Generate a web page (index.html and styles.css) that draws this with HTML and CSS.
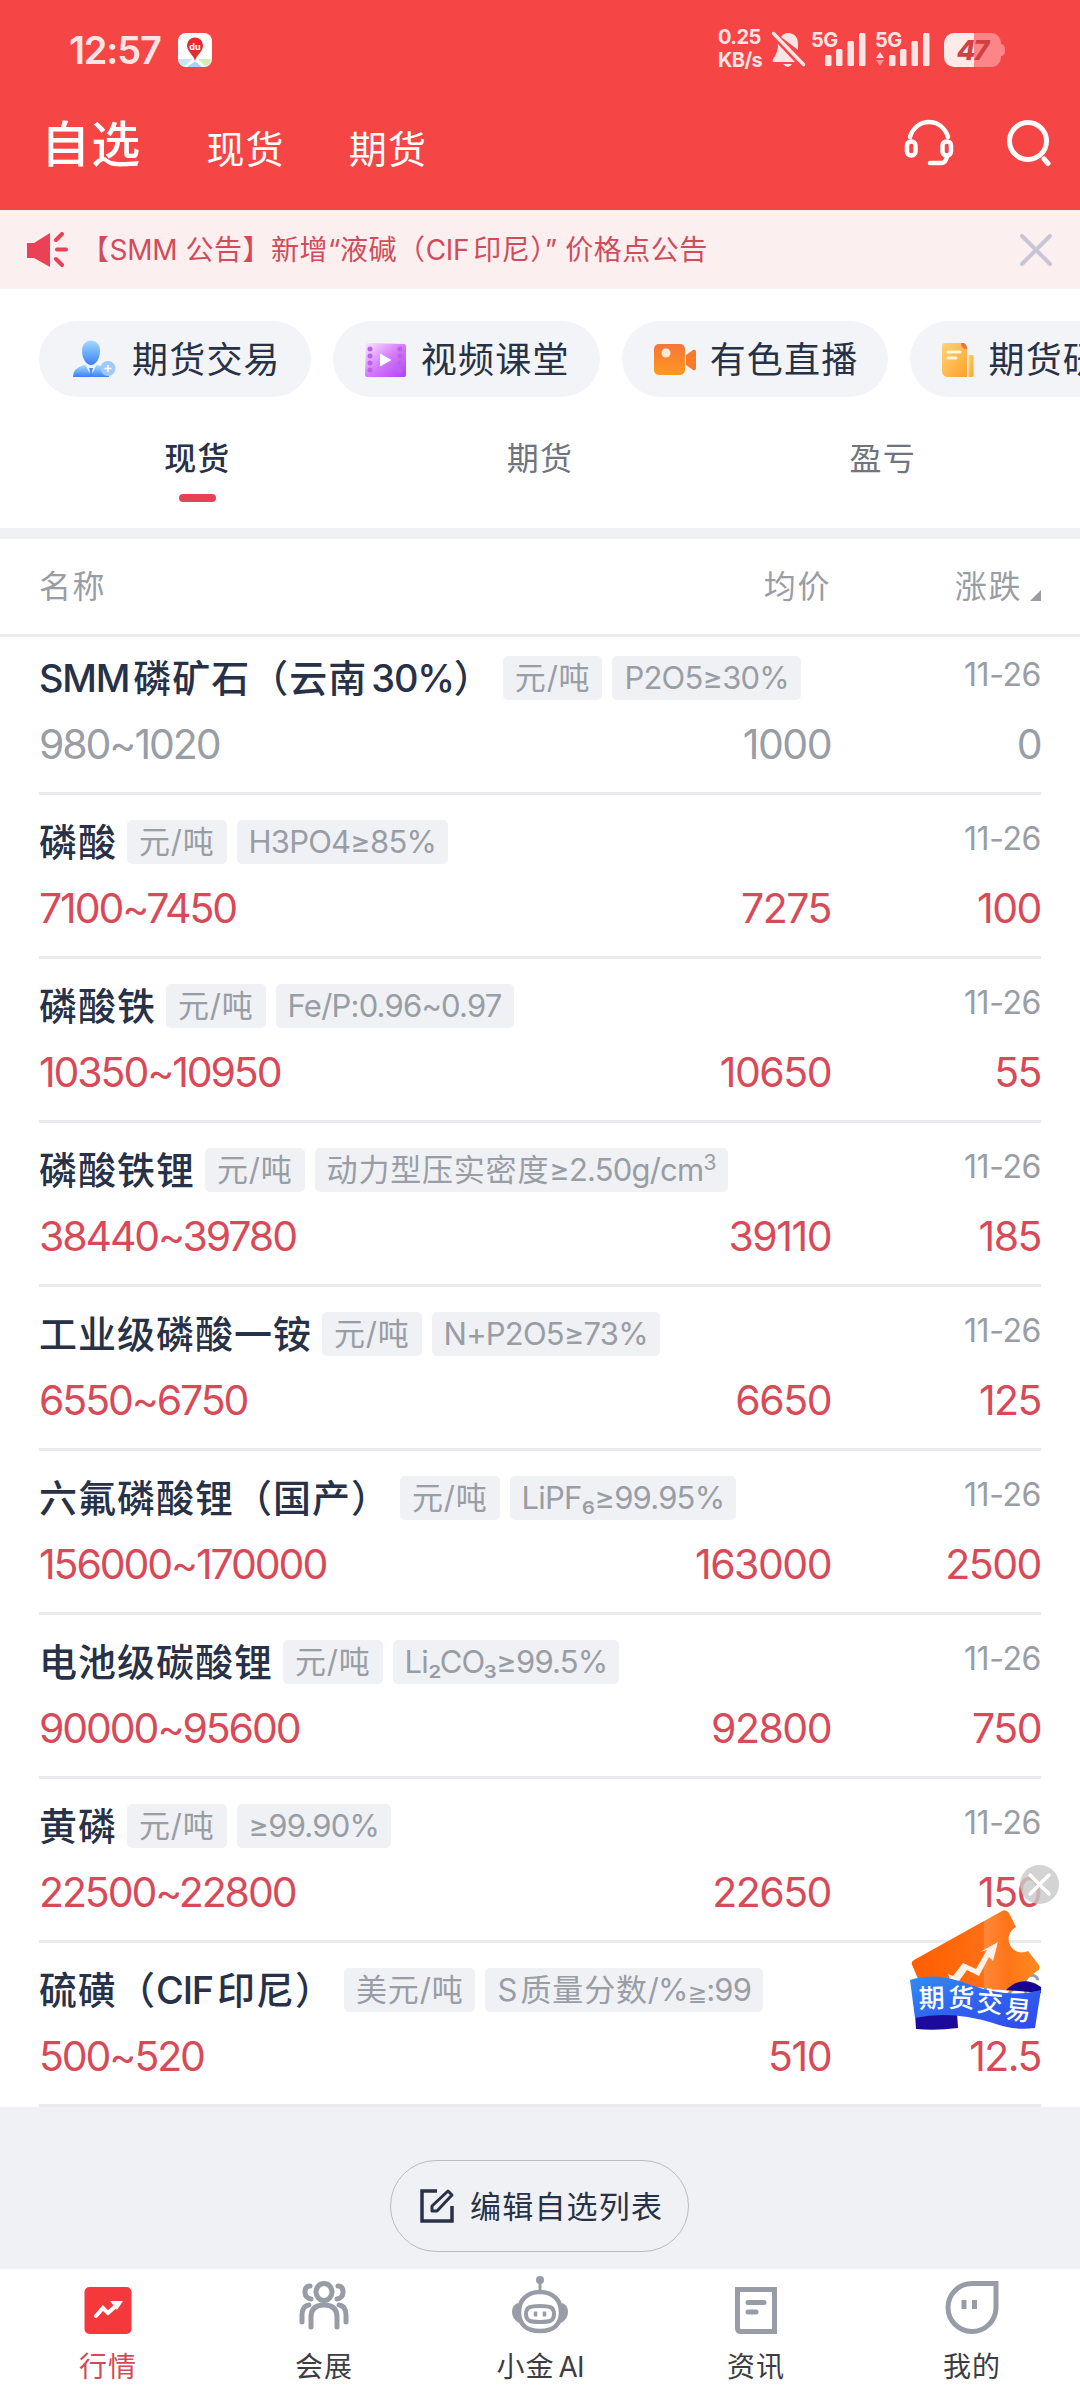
FILE: index.html
```html
<!DOCTYPE html>
<html lang="zh-CN">
<head>
    <meta charset="UTF-8">
    <meta name="viewport" content="width=device-width, initial-scale=1.0">
    <title>自选</title>
    <link rel="stylesheet" href="styles.css">
</head>
<body>

<header class="header">
    <div class="status-bar">
        <span class="time">12:57</span>
        <svg class="map-icon" width="34" height="34" viewBox="0 0 34 34">
            <rect width="34" height="34" rx="8" fill="#fff"/>
            <path d="M1 26h13L7 33Q1 32 1 26z" fill="#c5e6fa"/>
            <path d="M20 26h13q0 6-6 7z" fill="#d3ecb5"/>
            <path d="M16 29h2l6 5H9z" fill="#a8d4f5"/>
            <path d="M17 28C16 22 9 19 9 12.500a8 8 0 0 1 16 0C25 19 18 22 17 28z" fill="#e32c30"/>
            <text x="17" y="16.500" text-anchor="middle" class="map-text">du</text>
        </svg>
        <span class="speed">0.25<br>KB/s</span>
        <svg class="bell" width="36" height="38" viewBox="0 0 36 38" fill="#ffe4e4">
            <path d="M10 6Q13 2 17 2c7 0 10 5 10 11v6z"/>
            <path d="M7 13l17 18H2q-1-1 0-3 5-6 5-15z"/>
            <path d="M12 33h9q-4 6-9 0z"/>
            <path d="M2.500 2.500l30 31" stroke="#ffe4e4" stroke-width="3.500" stroke-linecap="round"/>
        </svg>
        <div class="signal">
            <span>5G</span>
            <svg width="56" height="38" viewBox="0 0 56 38" fill="#ffe4e4">
                <rect x="14" y="24" width="6.500" height="11" rx="1.500"/>
                <rect x="25" y="18" width="6.500" height="17" rx="1.500"/>
                <rect x="36.500" y="10" width="6.500" height="25" rx="1.500"/>
                <rect x="48" y="2" width="6.500" height="33" rx="1.500"/>
            </svg>
        </div>
        <div class="signal second">
            <span>5G</span>
            <svg width="56" height="38" viewBox="0 0 56 38" fill="#ffe4e4">
                <path d="M1 27l4-6 4 6z"/>
                <path d="M1 29h8l-4 6z" opacity=".5"/>
                <rect x="14" y="24" width="6.500" height="11" rx="1.500"/>
                <rect x="25" y="18" width="6.500" height="17" rx="1.500"/>
                <rect x="36.500" y="10" width="6.500" height="25" rx="1.500"/>
                <rect x="48" y="2" width="6.500" height="33" rx="1.500"/>
            </svg>
        </div>
        <svg class="battery" width="62" height="34" viewBox="0 0 62 34">
            <path d="M30 0h17a10 10 0 0 1 10 11q4 0 4 6t-4 6a10 10 0 0 1-10 11H30z" fill="#fb8587"/>
            <path d="M10 0h20v34H10A10 10 0 0 1 0 24V10A10 10 0 0 1 10 0z" fill="#ffeaea"/>
            <text x="28" y="27" text-anchor="middle" class="battery-text">47</text>
        </svg>
    </div>
    <nav class="main-nav">
        <span class="current">自选</span>
        <span>现货</span>
        <span>期货</span>
        <svg class="headset" width="50" height="48" viewBox="0 0 50 48" fill="none" stroke="#fff" stroke-width="4.500" stroke-linecap="round">
            <path d="M6 18C12-2 38-2 44 18"/>
            <rect x="3" y="22.500" width="8.500" height="14" rx="4"/>
            <rect x="38.500" y="22.500" width="8.500" height="14" rx="4"/>
            <path d="M43 37q-1 7-6 7H26"/>
        </svg>
        <svg class="search" width="46" height="48" viewBox="0 0 46 48" fill="none" stroke="#fff" stroke-width="5" stroke-linecap="round">
            <circle cx="22" cy="22" r="18.500"/>
            <path d="M38 40l4 4.500"/>
        </svg>
    </nav>
</header>

<div class="notice">
    <svg width="42" height="36" viewBox="0 0 42 36" fill="#ea4254" stroke="#ea4254">
        <path d="M1 11h7L24 1v34L8 26H1z" stroke="none"/>
        <path d="M30 8l6-6M31 17.500h9M30 27l6 6" stroke-width="4" stroke-linecap="round"/>
    </svg>
    <span class="notice-text">【<i>SMM</i> 公告】新增<i>“</i>液碱（<i class="gap-r">CIF</i>印尼）<i>”</i> 价格点公告</span>
    <svg width="32" height="32" viewBox="0 0 32 32" stroke="#c8c6d5" stroke-width="4" stroke-linecap="round">
        <path d="M2 2l28 28M30 2L2 30"/>
    </svg>
</div>

<div class="chips">
    <div class="chip">
        <svg width="47" height="38" viewBox="0 0 47 38">
            <defs>
                <linearGradient id="blue" x2="0" y2="1"><stop stop-color="#a2dcff"/><stop offset="1" stop-color="#3c7ef5"/></linearGradient>
            </defs>
            <path d="M2 37q0-9 11-12l7 3 7-3q11 3 11 12z" fill="url(#blue)"/>
            <path d="M14 24l6 12 6-12z" fill="#e8f0fc"/>
            <path d="M18 28h4l-1 3 1 6h-4l1-6z" fill="#4889f6"/>
            <path d="M11 11c0-14 18-14 18 0 0 7-4 14-9 14s-9-7-9-14z" fill="url(#blue)"/>
            <circle cx="37" cy="28.500" r="7.500" fill="#a1c8fb"/>
            <path d="M37 25v7M33.500 28.500h7" stroke="#fff" stroke-width="1.500"/>
        </svg>
        <span>期货交易</span>
    </div>
    <div class="chip">
        <svg width="42" height="38" viewBox="0 0 42 38">
            <defs>
                <linearGradient id="purple" x2="1" y2="1"><stop stop-color="#f8e8ff"/><stop offset=".5" stop-color="#d57cf9"/><stop offset="1" stop-color="#ad42f8"/></linearGradient>
            </defs>
            <path d="M3 3l36 1q2 0 2 2v29q0 2-2 2H2q-2 0-2-2L1 5q0-2 2-2z" fill="url(#purple)"/>
            <g fill="#bd62e8">
                <circle cx="5" cy="9" r="2.500"/><circle cx="5" cy="16" r="2.500"/><circle cx="5" cy="23" r="2.500"/><circle cx="5" cy="30" r="2.500"/>
                <circle cx="35" cy="9" r="2.500"/><circle cx="35" cy="16" r="2.500"/><circle cx="35" cy="23" r="2.500"/><circle cx="35" cy="30" r="2.500"/>
            </g>
            <path d="M15 13.500l11.500 6.500L15 26.500z" fill="#fff"/>
        </svg>
        <span>视频课堂</span>
    </div>
    <div class="chip">
        <svg width="42" height="38" viewBox="0 0 42 38">
            <defs>
                <linearGradient id="orange" x2="0" y2="1"><stop stop-color="#f4763c"/><stop offset="1" stop-color="#ff981d"/></linearGradient>
            </defs>
            <rect y="4" width="31" height="31" rx="5" fill="url(#orange)"/>
            <path d="M32 15l7-5q3-1 3 2v16q0 3-3 2l-7-5z" fill="#f97a28"/>
            <circle cx="12" cy="13" r="4.500" fill="#ffe9d6"/>
        </svg>
        <span>有色直播</span>
    </div>
    <div class="chip">
        <svg width="32" height="38" viewBox="0 0 32 38">
            <defs>
                <linearGradient id="yellow" x2="1" y2="1"><stop stop-color="#ffd374"/><stop offset="1" stop-color="#fba22c"/></linearGradient>
            </defs>
            <path d="M3 3h19q3 2 3 6v28H5q-5-1-5-6V6q0-3 3-3z" fill="url(#yellow)"/>
            <path d="M19 3h3q3 2 3 6-6 0-6-6z" fill="#f0703c"/>
            <rect x="26.500" y="15" width="5" height="22" rx="1" fill="url(#yellow)"/>
            <path d="M6 12h12M6 18h8" stroke="#fff5dc" stroke-width="3" stroke-linecap="round"/>
        </svg>
        <span>期货研报</span>
    </div>
</div>

<div class="tabs">
    <span class="tab active">现货</span>
    <span class="tab">期货</span>
    <span class="tab">盈亏</span>
</div>

<div class="list-head">
    <span class="col-name">名称</span>
    <span class="col-avg">均价</span>
    <span class="col-change">涨跌<svg width="11" height="11" viewBox="0 0 11 11"><path d="M11 0v11H0z" fill="#999da6"/></svg></span>
</div>

<main class="list">
    <div class="row flat">
        <div class="title"><b><i class="gap-r">SMM</i>磷矿石（云南<i class="gap-l">30%</i>）</b><em>元/吨</em><em><i>P2O5≥30%</i></em><time>11-26</time></div>
        <div class="prices"><span>980~1020</span><span>1000</span><span>0</span></div>
    </div>
    <div class="row">
        <div class="title"><b>磷酸</b><em>元/吨</em><em><i>H3PO4≥85%</i></em><time>11-26</time></div>
        <div class="prices"><span>7100~7450</span><span>7275</span><span>100</span></div>
    </div>
    <div class="row">
        <div class="title"><b>磷酸铁</b><em>元/吨</em><em><i>Fe/P:0.96~0.97</i></em><time>11-26</time></div>
        <div class="prices"><span>10350~10950</span><span>10650</span><span>55</span></div>
    </div>
    <div class="row">
        <div class="title"><b>磷酸铁锂</b><em>元/吨</em><em>动力型压实密度<i>≥2.50g/cm<sup>3</sup></i></em><time>11-26</time></div>
        <div class="prices"><span>38440~39780</span><span>39110</span><span>185</span></div>
    </div>
    <div class="row">
        <div class="title"><b>工业级磷酸一铵</b><em>元/吨</em><em><i>N+P2O5≥73%</i></em><time>11-26</time></div>
        <div class="prices"><span>6550~6750</span><span>6650</span><span>125</span></div>
    </div>
    <div class="row">
        <div class="title"><b>六氟磷酸锂（国产）</b><em>元/吨</em><em><i>LiPF₆≥99.95%</i></em><time>11-26</time></div>
        <div class="prices"><span>156000~170000</span><span>163000</span><span>2500</span></div>
    </div>
    <div class="row">
        <div class="title"><b>电池级碳酸锂</b><em>元/吨</em><em><i>Li₂CO₃≥99.5%</i></em><time>11-26</time></div>
        <div class="prices"><span>90000~95600</span><span>92800</span><span>750</span></div>
    </div>
    <div class="row">
        <div class="title"><b>黄磷</b><em>元/吨</em><em><i>≥99.90%</i></em><time>11-26</time></div>
        <div class="prices"><span>22500~22800</span><span>22650</span><span>150</span></div>
    </div>
    <div class="row">
        <div class="title"><b>硫磺（<i class="gap-r">CIF</i>印尼）</b><em>美元/吨</em><em><i class="gap-r">S</i>质量分数<i>/%<span class="geq">≧</span>:99</i></em><time>11-26</time></div>
        <div class="prices"><span>500~520</span><span>510</span><span>12.5</span></div>
    </div>
</main>

<div class="edit-area">
    <div class="edit-btn">
        <svg width="36" height="36" viewBox="0 0 36 36" fill="none" stroke="#2a3248" stroke-width="3.500">
            <path d="M18 3H3v30h30V18"/>
            <path d="M13 23v-5L29 3l4 4-15 16z" stroke-width="3" stroke-linejoin="round"/>
        </svg>
        <span>编辑自选列表</span>
    </div>
</div>

<footer class="tab-bar">
    <div class="item active">
        <svg width="60" height="60" viewBox="0 0 60 60">
            <rect x="6.500" y="12" width="47" height="47" rx="5" fill="#f5383c"/>
            <path d="M18 41l7-8 5 5 10-9" stroke="#fff" stroke-width="4" fill="none" stroke-linecap="round"/>
            <path d="M32 26h13l-6 9z" fill="#fff"/>
        </svg>
        <span>行情</span>
    </div>
    <div class="item">
        <svg width="60" height="60" viewBox="0 0 60 60" fill="none" stroke="#979ca7" stroke-width="5" stroke-linecap="round">
            <ellipse cx="30" cy="17" rx="8" ry="8.500"/>
            <path d="M17 52V42q0-12 13-12t13 12v10"/>
            <path d="M16 11q-5 0-5 6t6 7M44 11q5 0 5 6t-6 7M15 30q-7 1-7 10v7M45 30q7 1 7 10v7"/>
        </svg>
        <span>会展</span>
    </div>
    <div class="item">
        <svg width="60" height="60" viewBox="0 0 60 60" fill="none" stroke="#979ca7" stroke-width="4.500">
            <circle cx="30" cy="5" r="4" fill="#979ca7" stroke="none"/>
            <path d="M30 6v10" stroke-width="3"/>
            <path d="M30 17C16 17 9 26 9 37s6 19 21 19 21-8 21-19-7-20-21-20z"/>
            <path d="M30 31c10 0 14 1 14 8s-4 8-14 8-14-1-14-8 4-8 14-8z" stroke-width="4"/>
            <path d="M8 28q-6 2-6 9t7 11zM52 28q6 2 6 9t-7 11z" fill="#979ca7" stroke="none"/>
            <path d="M25.500 36.500v5M34.500 36.500v5" stroke-width="3.500"/>
        </svg>
        <span>小金<i class="gap-l">AI</i></span>
    </div>
    <div class="item">
        <svg width="60" height="60" viewBox="0 0 60 60" fill="none" stroke="#979ca7" stroke-width="5">
            <path d="M11.500 14.500h37v42H15q-3.500 0-3.500-3.500z"/>
            <path d="M22 27.500h16M22 37h8" stroke-linecap="round"/>
        </svg>
        <span>资讯</span>
    </div>
    <div class="item">
        <svg width="60" height="60" viewBox="0 0 60 60" fill="none" stroke="#979ca7" stroke-width="5">
            <path d="M30 8.500h24V33a24 24 0 1 1-24-24.500z"/>
            <path d="M22 25v9M32.500 25v9"/>
        </svg>
        <span>我的</span>
    </div>
</footer>

<!-- Floating ad -->
<div class="float-ad">
    <svg width="150" height="170" viewBox="0 0 150 170">
        <defs>
            <linearGradient id="ticket"><stop stop-color="#ff5e00"/><stop offset=".56" stop-color="#ff6e14"/><stop offset=".57" stop-color="#ff8838"/><stop offset=".75" stop-color="#ff7418"/><stop offset="1" stop-color="#ff8c20"/></linearGradient>
            <linearGradient id="ribbon" x2="1" y2="1"><stop stop-color="#2f8df5"/><stop offset=".5" stop-color="#2f62f0"/><stop offset="1" stop-color="#3048ea"/></linearGradient>
        </defs>
        <path d="M3 102q-3-5 1-7L92 46q4-2 7 2l7 14a13 13 0 0 0 12 24l11 14q2 4-2 6l-25 20-93-10z" fill="url(#ticket)"/>
        <path d="M38 109l5 2 10-13 13 6 11-19-7 2 18-10-5 19-4-4-10 19-12-6-8 11-8 2z" fill="#fff1e5"/>
        <path d="M96 125q16-16 35-3v6z" fill="#17008f"/>
        <path d="M5 148l1 16q20 2 42-1l-1-15z" fill="#1c0a9c"/>
        <path d="M0 115q26-9 61 5 38 14 70 5l-6 38q-20 3-42-5-42-13-78-5z" fill="url(#ribbon)"/>
        <g class="ad-text">
            <text x="9" y="143" transform="rotate(-2 9 143)">期</text>
            <text x="38" y="142" transform="rotate(2 38 142)">货</text>
            <text x="66" y="146" transform="rotate(5 66 146)">交</text>
            <text x="94" y="153" transform="rotate(6 94 153)">易</text>
        </g>
        <circle cx="129.500" cy="19.500" r="19.500" fill="#c9c9c9" opacity=".82"/>
        <path d="M120 10l19 19M139 10l-19 19" stroke="#fff" stroke-width="3.500" stroke-linecap="round"/>
    </svg>
</div>

</body>
</html>
```
FILE: styles.css
```css
* {
    box-sizing: border-box;
}

body {
    position: relative;
    width: 1080px;
    height: 2400px;
    margin: 0;
    overflow: hidden;
    background-color: #fff;
    color: #273147;
    font-family: Inter, "Noto Sans CJK SC", sans-serif;
}

svg {
    display: block;
    flex-shrink: 0;
}

span, b, em, time {
    white-space: nowrap;
}

/* Latin runs inside Chinese text */
i {
    font-style: normal;
    letter-spacing: -1px;
}

.gap-r {
    margin-right: 4px;
}

.gap-l {
    margin-left: 4px;
}

/* Header */
.header {
    height: 210px;
    background-color: #f54545;
    color: #fff;
}

.status-bar {
    display: flex;
    align-items: center;
    height: 100px;
    padding-left: 69px;
    color: #ffe4e4;
}

.time {
    width: 109px;
    font-size: 38px;
    font-weight: 600;
    letter-spacing: -1.2px;
}

.map-text {
    font-size: 9px;
    font-weight: 700;
    fill: #fff;
}

.speed {
    width: 44px;
    margin-left: 506px;
    padding-bottom: 2px;
    font-size: 20px;
    font-weight: 700;
    line-height: 23px;
    letter-spacing: -0.6px;
}

.bell {
    margin-left: 9px;
}

.signal {
    position: relative;
    margin-left: 4px;
}

.signal.second {
    margin-left: 8px;
}

.signal span {
    position: absolute;
    top: -2px;
    left: 0;
    font-size: 20px;
    font-weight: 700;
    line-height: 22px;
    letter-spacing: -0.5px;
}

.battery {
    margin-left: 13px;
}

.battery-text {
    font-size: 27px;
    font-weight: 800;
    font-style: italic;
    letter-spacing: -2px;
    fill: #d24044;
}

.main-nav {
    display: flex;
    align-items: center;
    height: 86px;
    padding: 0 28px 0 41px;
}

.main-nav span {
    padding-top: 6px;
    margin-right: 64px;
    font-size: 38px;
    letter-spacing: 1.2px;
}

.main-nav .current {
    padding-top: 0;
    margin-top: -5px;
    margin-right: 65px;
    font-size: 49px;
    font-weight: 500;
}

.main-nav .headset {
    margin-left: auto;
}

.main-nav .search {
    margin-left: 52px;
}

/* Notice */
.notice {
    display: flex;
    align-items: center;
    height: 79px;
    padding: 0 28px 0 26px;
    background-color: #fceff0;
    color: #d04c5a;
}

.notice-text {
    flex: 1;
    margin: -4px 0 0 13px;
    font-size: 28px;
    letter-spacing: 0.5px;
}

.notice-text i {
    letter-spacing: -0.3px;
}

/* Chips */
.chips {
    display: flex;
    gap: 22px;
    padding: 32px 0 0 39px;
    overflow: hidden;
}

.chip {
    display: flex;
    flex-shrink: 0;
    align-items: center;
    gap: 14px;
    height: 76px;
    padding: 0 30px 0 32px;
    border-radius: 38px;
    background-color: #f2f4f8;
    font-size: 36px;
    letter-spacing: 1.2px;
}

.chip span {
    margin-top: -4px;
}

/* Tabs */
.tabs {
    display: flex;
    height: 142px;
    padding: 38px 26px 0;
    border-bottom: 11px solid #f0f1f4;
}

.tab {
    flex: 1;
    font-size: 32px;
    line-height: 48px;
    letter-spacing: 1.2px;
    text-align: center;
    color: #6f747f;
}

.tab.active {
    font-weight: 500;
    color: #273147;
}

.tab.active::after {
    content: "";
    display: block;
    width: 37px;
    height: 8px;
    margin: 11px auto 0;
    border-radius: 4px;
    background-color: #e44356;
}

/* Price list */
.list-head {
    display: flex;
    align-items: center;
    height: 98px;
    padding: 0 39px 5px;
    border-bottom: 3px solid #ececee;
    font-size: 32px;
    letter-spacing: 1.6px;
    color: #999da6;
}

.col-avg {
    margin-left: auto;
}

.col-change {
    display: flex;
    align-items: flex-end;
    justify-content: flex-end;
    gap: 8px;
    width: 210px;
}

.col-change svg {
    margin-bottom: 6px;
}

.list {
    display: flex;
    flex-direction: column;
    justify-content: flex-end;
    height: 1470px;
    overflow: hidden;
}

.row {
    flex-shrink: 0;
    height: 164px;
    margin: 0 39px;
    padding-top: 25px;
    border-bottom: 3px solid #ebebed;
}

.title {
    display: flex;
    align-items: center;
    height: 44px;
}

.title b {
    margin-top: -5px;
    font-size: 38px;
    font-weight: 500;
    letter-spacing: 1px;
}

.title b i {
    letter-spacing: -1.2px;
}

.title em {
    height: 44px;
    margin-left: 10px;
    padding: 0 12px;
    border-radius: 5px;
    background-color: #f0f1f4;
    font-size: 31px;
    font-style: normal;
    line-height: 43px;
    letter-spacing: 0.8px;
    color: #999da6;
}

.title em i {
    letter-spacing: -0.8px;
}

.title .geq {
    font-family: "DejaVu Sans", sans-serif;
    font-size: 23px;
}

.title sup {
    font-size: 21px;
    line-height: 0;
}

.title time {
    margin: -8px 0 0 auto;
    font-size: 32px;
    letter-spacing: -0.4px;
    color: #999da6;
}

.prices {
    display: grid;
    grid-template-columns: 1fr 300px 210px;
    margin-top: 18px;
    font-size: 41px;
    line-height: 52px;
    letter-spacing: -1.5px;
    color: #d94a59;
}

.prices span:first-child {
    letter-spacing: -2.1px;
}

.prices span + span {
    text-align: right;
}

.flat .prices {
    color: #999da6;
}

/* Edit button */
.edit-area {
    height: 162px;
    padding-top: 53px;
    background-color: #f0f1f4;
}

.edit-btn {
    display: flex;
    align-items: center;
    gap: 15px;
    width: 299px;
    height: 92px;
    margin: 0 auto 0 390px;
    padding-left: 28px;
    border: 1px solid #b8bcc4;
    border-radius: 46px;
    font-size: 31px;
    letter-spacing: 1.2px;
}

.edit-btn span {
    margin-top: -4px;
}

/* Bottom bar */
.tab-bar {
    display: flex;
    height: 131px;
    background-color: #fff;
}

.item {
    display: flex;
    flex: 1;
    flex-direction: column;
    align-items: center;
    padding-top: 6px;
    font-size: 28px;
    line-height: 40px;
    letter-spacing: 1px;
    color: #3b3d43;
}

.item span {
    margin-top: 12px;
}

.item.active {
    color: #cf4b59;
}

/* Floating ad */
.float-ad {
    position: absolute;
    top: 1865px;
    left: 910px;
}

.ad-text {
    font-size: 26px;
    font-weight: 500;
    fill: #fff;
}
```
